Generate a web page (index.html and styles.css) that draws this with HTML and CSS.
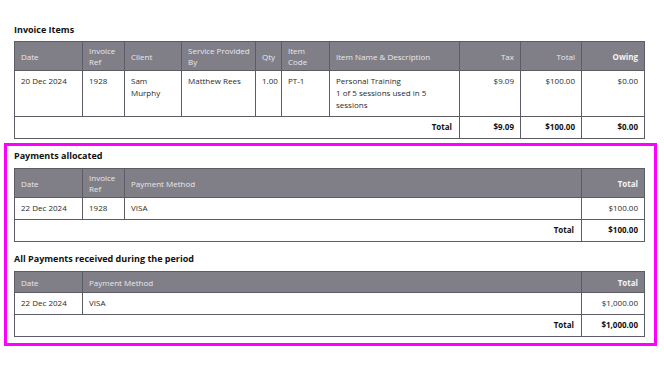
FILE: index.html
```html
<!DOCTYPE html>
<html>
<head>
<meta charset="utf-8">
<link rel="stylesheet" href="styles.css">
</head>
<body>
<div class="page">
  <section class="block first">
    <h2 class="title">Invoice Items</h2>
    <table class="tbl">
      <colgroup>
        <col style="width:68px"><col style="width:42px"><col style="width:57px"><col style="width:74px"><col style="width:26px"><col style="width:48px"><col style="width:130px"><col style="width:61px"><col style="width:61px"><col style="width:63px">
      </colgroup>
      <thead>
        <tr>
          <th>Date</th><th>Invoice Ref</th><th>Client</th><th>Service Provided By</th><th>Qty</th><th>Item Code</th><th>Item Name &amp; Description</th><th class="r">Tax</th><th class="r">Total</th><th class="r b">Owing</th>
        </tr>
      </thead>
      <tbody>
        <tr>
          <td>20 Dec 2024</td><td>1928</td><td>Sam Murphy</td><td>Matthew Rees</td><td>1.00</td><td>PT-1</td><td>Personal Training<br>1 of 5 sessions used in 5 sessions</td><td class="r">$9.09</td><td class="r">$100.00</td><td class="r">$0.00</td>
        </tr>
        <tr class="tot">
          <td colspan="7" class="r">Total</td><td class="r">$9.09</td><td class="r">$100.00</td><td class="r">$0.00</td>
        </tr>
      </tbody>
    </table>
  </section>

  <div class="highlight">
    <section class="block">
      <h2 class="title">Payments allocated</h2>
      <table class="tbl">
        <colgroup>
          <col style="width:68px"><col style="width:42px"><col style="width:457px"><col style="width:63px">
        </colgroup>
        <thead>
          <tr><th>Date</th><th>Invoice Ref</th><th>Payment Method</th><th class="r b">Total</th></tr>
        </thead>
        <tbody>
          <tr><td>22 Dec 2024</td><td>1928</td><td>VISA</td><td class="r">$100.00</td></tr>
          <tr class="tot"><td colspan="3" class="r">Total</td><td class="r">$100.00</td></tr>
        </tbody>
      </table>
    </section>

    <section class="block second">
      <h2 class="title">All Payments received during the period</h2>
      <table class="tbl">
        <colgroup>
          <col style="width:68px"><col style="width:499px"><col style="width:63px">
        </colgroup>
        <thead>
          <tr><th>Date</th><th>Payment Method</th><th class="r b">Total</th></tr>
        </thead>
        <tbody>
          <tr><td>22 Dec 2024</td><td>VISA</td><td class="r">$1,000.00</td></tr>
          <tr class="tot"><td colspan="2" class="r">Total</td><td class="r">$1,000.00</td></tr>
        </tbody>
      </table>
    </section>
  </div>
</div>
</body>
</html>
```

FILE: styles.css
```css
html, body {
  margin: 0;
  padding: 0;
  background: #ffffff;
}

body {
  font-family: "Open Sans", "Liberation Sans", sans-serif;
  font-size: 8px;
  color: #2a2a2a;
}

.page {
  padding: 24px 19px 0 14px;
  width: 631px;
}

.title {
  margin: 0 0 5px 0;
  font-size: 9px;
  line-height: 12px;
  font-weight: 700;
  color: #111;
}

.highlight .title {
  margin-bottom: 6px;
}

.highlight {
  margin: 4px -12px 0 -10px;
  border: 3px solid #ff00ff;
  padding: 4px 9px 6px 7px;
}

.block.second {
  margin-top: 11px;
}

.tbl {
  width: 631px;
  border-collapse: collapse;
  table-layout: fixed;
  border: 1px solid #5d5b64;
}

.tbl th,
.tbl td {
  border: 1px solid #5d5b64;
  padding: 4px 6px 5px 6px;
  line-height: 12px;
  text-align: left;
  vertical-align: top;
}

.tbl th {
  background: #807f88;
  color: #e8e8ec;
  font-weight: 400;
  vertical-align: middle;
  line-height: 11px;
  padding: 3px 4px 3px 6px;
  height: 14px;
}

.tbl .r {
  text-align: right;
}

.tbl th.r {
  padding-right: 6px;
}

.tbl th.b {
  font-weight: 700;
  color: #f4f4f6;
}

.tbl .tot td {
  font-weight: 700;
  color: #111;
}

.tbl .tot td:first-child {
  padding-right: 7px;
}
```
